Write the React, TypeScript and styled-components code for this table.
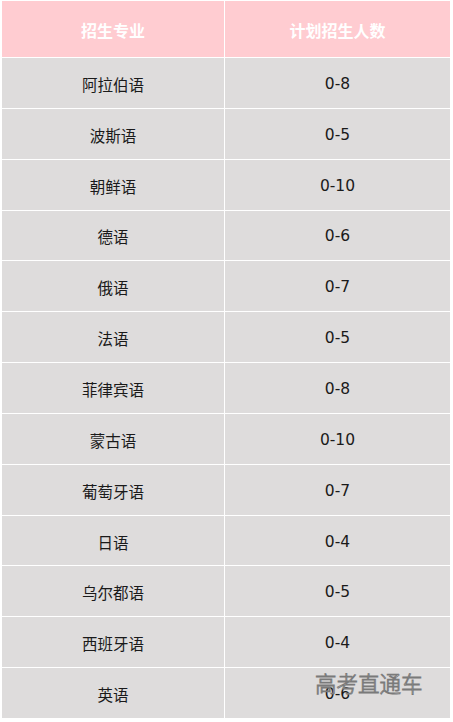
import React from 'react';
import styled, { createGlobalStyle } from 'styled-components';

const GlobalStyle = createGlobalStyle`
  html, body {
    margin: 0;
    padding: 0;
    background: #ffffff;
  }
  body {
    font-family: "DejaVu Sans", "Noto Sans CJK SC", sans-serif;
  }
`;

const Page = styled.div`
  position: relative;
  width: 453px;
  height: 722px;
  overflow: hidden;
  padding: 1px 3px 0 2px;
  box-sizing: border-box;
`;

const Table = styled.div`
  display: grid;
  grid-template-columns: 222px 225px;
  grid-auto-rows: 49.85px;
  grid-template-rows: 56px;
  column-gap: 1px;
  row-gap: 1px;
`;

const HeadCell = styled.div`
  background: #ffccd1;
  color: #ffffff;
  font-family: "Noto Sans CJK SC", sans-serif;
  font-weight: bold;
  font-size: 16px;
  display: flex;
  align-items: center;
  justify-content: center;
  padding-top: 1px;
`;

const Cell = styled.div`
  background: #dedcdc;
  color: #1a1a1a;
  font-size: 15.5px;
  display: flex;
  align-items: center;
  justify-content: center;
  padding-top: 2px;
`;

const Watermark = styled.div`
  position: absolute;
  left: 315px;
  top: 667px;
  font-family: "Noto Sans CJK SC", sans-serif;
  font-weight: 300;
  font-size: 21.5px;
  color: #eeeeee;
  -webkit-text-stroke: 0.9px #7a7a7a;
  white-space: nowrap;
`;

const rows: [string, string][] = [
  ['阿拉伯语', '0-8'],
  ['波斯语', '0-5'],
  ['朝鲜语', '0-10'],
  ['德语', '0-6'],
  ['俄语', '0-7'],
  ['法语', '0-5'],
  ['菲律宾语', '0-8'],
  ['蒙古语', '0-10'],
  ['葡萄牙语', '0-7'],
  ['日语', '0-4'],
  ['乌尔都语', '0-5'],
  ['西班牙语', '0-4'],
  ['英语', '0-6'],
];

export default function App() {
  return (
    <Page>
      <GlobalStyle />
      <Table>
        <HeadCell>招生专业</HeadCell>
        <HeadCell>计划招生人数</HeadCell>
        {rows.map(([name, count]) => (
          <React.Fragment key={name}>
            <Cell>{name}</Cell>
            <Cell>{count}</Cell>
          </React.Fragment>
        ))}
      </Table>
      <Watermark>高考直通车</Watermark>
    </Page>
  );
}
